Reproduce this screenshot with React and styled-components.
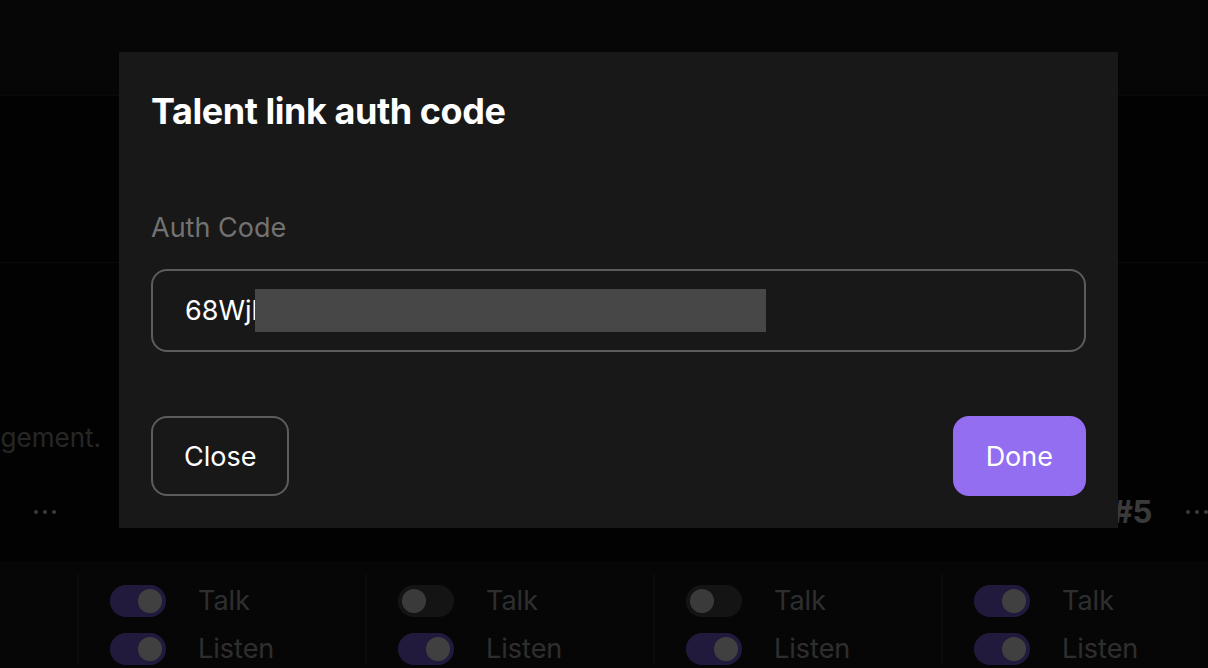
import React from 'react';
import styled, { createGlobalStyle } from 'styled-components';

const purple = '#936ef0';
const modalBg = '#181818';
const outline = '#5c5c5c';

const GlobalStyle = createGlobalStyle`
  html, body {
    margin: 0;
    padding: 0;
    background: #000;
  }
  body {
    font-family: Inter, "Noto Sans", "Liberation Sans", sans-serif;
    -webkit-font-smoothing: antialiased;
  }
  * { box-sizing: border-box; }
`;

const Page = styled.div`
  position: relative;
  width: 1208px;
  height: 668px;
  overflow: hidden;
  background: #080808;
  display: flex;
  flex-direction: column;
`;

const TopBar = styled.header`
  height: 96px;
  flex: none;
  background: #181818;
  border-bottom: 1px solid #282828;
`;

const Hero = styled.section`
  height: 167px;
  flex: none;
  border-bottom: 1px solid #282828;
`;

const Content = styled.section`
  flex: 1;
  display: flex;
  flex-direction: column;
`;

const Description = styled.div`
  width: 101px;
  margin-top: 160px;
  height: 30px;
  display: flex;
  justify-content: flex-end;
  overflow: hidden;
  white-space: nowrap;
  font-size: 26px;
  line-height: 30px;
  color: #989898;
`;

const Strip = styled.div`
  margin-left: -211px;
  display: flex;
  flex-direction: column;
  width: 1440px;
`;

const HeaderRow = styled.div`
  display: flex;
  height: 48px;
  margin-top: 34px;
  margin-bottom: 26px;
`;

const ChannelHead = styled.div`
  width: 288px;
  flex: none;
  display: flex;
  align-items: center;
  justify-content: space-between;
  padding: 0 21px 0 41px;
`;

const ChannelTitle = styled.span`
  font-size: 31px;
  font-weight: 700;
  letter-spacing: -0.3px;
  color: #e8e8e8;
`;

const Dots = styled.span`
  display: flex;
  gap: 5px;
  padding-top: 2px;

  & > i {
    width: 4px;
    height: 4px;
    border-radius: 50%;
    background: #e8e8e8;
  }
`;

const Panel = styled.div`
  flex: 1;
  display: flex;
  background: #181818;
  padding-top: 13px;
`;

const ChannelRow = styled.div`
  display: flex;
`;

const Channel = styled.div`
  width: 288px;
  flex: none;
  border-left: ${p => (p.$first ? 'none' : '2px solid #2c2c2c')};
  padding: 10px 0 0 31px;
  display: flex;
  flex-direction: column;
  gap: 15px;
`;

const SwitchRow = styled.div`
  display: flex;
  align-items: center;
  gap: 32px;
`;

const Track = styled.span`
  width: 56px;
  height: 32px;
  border-radius: 16px;
  background: ${p => (p.$on ? '#8868f0' : '#505050')};
  display: flex;
  align-items: center;
  justify-content: ${p => (p.$on ? 'flex-end' : 'flex-start')};
  padding: 0 4px;
`;

const Knob = styled.span`
  width: 24px;
  height: 24px;
  border-radius: 50%;
  background: ${p => (p.$on ? '#ffffff' : '#e8e8e8')};
`;

const SwitchLabel = styled.span`
  font-size: 27px;
  color: #b8b8b8;
`;

const Overlay = styled.div`
  position: absolute;
  inset: 0;
  background: rgba(0, 0, 0, 0.75);
  padding: 52px 0 0 119px;
`;

const Modal = styled.div`
  width: 999px;
  height: 476px;
  background: ${modalBg};
  padding: 32px;
  display: flex;
  flex-direction: column;
`;

const Title = styled.h2`
  margin: 5px 0 0;
  font-size: 36px;
  line-height: 44px;
  font-weight: 700;
  color: #fff;
  letter-spacing: -0.45px;
`;

const Label = styled.label`
  margin-top: 78px;
  font-size: 27px;
  line-height: 34px;
  color: #727272;
`;

const Field = styled.div`
  margin-top: 24px;
  height: 83px;
  border: 2px solid ${outline};
  border-radius: 16px;
  display: flex;
  align-items: center;
  padding: 0 32px;
  font-size: 27px;
  color: #fff;
  white-space: nowrap;
`;

const Redacted = styled.span`
  display: inline-block;
  width: 511px;
  height: 43px;
  background: #474747;
  margin-left: -3px;
`;

const Actions = styled.div`
  margin-top: auto;
  display: flex;
  justify-content: space-between;
`;

const Button = styled.button`
  height: 80px;
  padding: 0 31px;
  border-radius: 16px;
  font-family: inherit;
  font-size: 27px;
  color: #fff;
  cursor: pointer;
  border: 2px solid ${p => (p.$primary ? purple : outline)};
  background: ${p => (p.$primary ? purple : 'transparent')};
`;

const channels = [
  { name: 'Channel #1', talk: true, listen: true },
  { name: 'Channel #2', talk: true, listen: true },
  { name: 'Channel #3', talk: false, listen: true },
  { name: 'Channel #4', talk: false, listen: true },
  { name: 'Channel #5', talk: true, listen: true },
];

function Switch({ on, label }) {
  return (
    <SwitchRow>
      <Track $on={on}>
        <Knob $on={on} />
      </Track>
      <SwitchLabel>{label}</SwitchLabel>
    </SwitchRow>
  );
}

export default function App() {
  return (
    <>
      <GlobalStyle />
      <Page>
        <TopBar />
        <Hero />
        <Content>
          <Description>Choose talk and listen channels for talent link engagement.</Description>
          <Strip>
            <HeaderRow>
              {channels.map(c => (
                <ChannelHead key={c.name}>
                  <ChannelTitle>{c.name}</ChannelTitle>
                  <Dots aria-label="More">
                    <i />
                    <i />
                    <i />
                  </Dots>
                </ChannelHead>
              ))}
            </HeaderRow>
          </Strip>
          <Panel>
            <Strip>
              <ChannelRow>
                {channels.map((c, i) => (
                  <Channel key={c.name} $first={i === 0}>
                    <Switch on={c.talk} label="Talk" />
                    <Switch on={c.listen} label="Listen" />
                  </Channel>
                ))}
              </ChannelRow>
            </Strip>
          </Panel>
        </Content>
        <Overlay>
          <Modal role="dialog" aria-labelledby="auth-title">
            <Title id="auth-title">Talent link auth code</Title>
            <Label>Auth Code</Label>
            <Field>
              68Wjl<Redacted />
            </Field>
            <Actions>
              <Button>Close</Button>
              <Button $primary>Done</Button>
            </Actions>
          </Modal>
        </Overlay>
      </Page>
    </>
  );
}
